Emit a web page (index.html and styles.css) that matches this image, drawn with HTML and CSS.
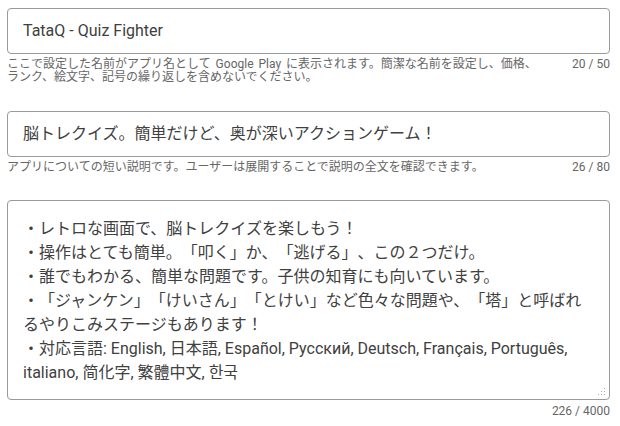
FILE: index.html
```html
<!DOCTYPE html>
<html lang="ja">
<head>
<meta charset="utf-8">
<link rel="stylesheet" href="styles.css">
</head>
<body>
<div class="form">
  <div class="field name-field">
    <div class="box single">TataQ - Quiz Fighter</div>
    <div class="meta">
      <div class="help">ここで設定した名前がアプリ名として Google Play に表示されます。簡潔な名前を設定し、価格、ランク、絵文字、記号の繰り返しを含めないでください。</div>
      <div class="count">20 / 50</div>
    </div>
  </div>
  <div class="field short-field">
    <div class="box single">脳トレクイズ。簡単だけど、奥が深いアクションゲーム！</div>
    <div class="meta">
      <div class="help">アプリについての短い説明です。ユーザーは展開することで説明の全文を確認できます。</div>
      <div class="count">26 / 80</div>
    </div>
  </div>
  <div class="field long-field">
    <div class="box multi">
      <p>・レトロな画面で、脳トレクイズを楽しもう！</p>
      <p>・操作はとても簡単。「叩く」か、「逃げる」、この２つだけ。</p>
      <p>・誰でもわかる、簡単な問題です。子供の知育にも向いています。</p>
      <p>・「ジャンケン」「けいさん」「とけい」など色々な問題や、「塔」と呼ばれるやりこみステージもあります！</p>
      <p>・対応言語: English, 日本語, Español, Русский, Deutsch, Français, Português, italiano, 简化字, 繁體中文, 한국</p>
      <svg class="grip" width="8" height="8" viewBox="0 0 8 8">
        <rect x="6" y="0" width="1" height="1" fill="#aaa"/>
        <rect x="3" y="3" width="1" height="1" fill="#aaa"/>
        <rect x="6" y="3" width="1" height="1" fill="#aaa"/>
        <rect x="0" y="6" width="1" height="1" fill="#aaa"/>
        <rect x="3" y="6" width="1" height="1" fill="#aaa"/>
        <rect x="6" y="6" width="1" height="1" fill="#aaa"/>
      </svg>
    </div>
    <div class="meta">
      <div class="help"></div>
      <div class="count">226 / 4000</div>
    </div>
  </div>
</div>
</body>
</html>
```

FILE: styles.css
```css
html, body {
  margin: 0;
  padding: 0;
  background: #fff;
}
body {
  font-family: Roboto, "Noto Sans CJK JP", sans-serif;
  color: #3c3c3c;
  text-spacing-trim: space-all;
}
.form {
  padding: 8px 10px 0 7px;
  display: flex;
  flex-direction: column;
}
.field {
  display: flex;
  flex-direction: column;
}
.name-field {
  margin-bottom: 27px;
}
.short-field {
  margin-bottom: 26px;
}
.box {
  border: 1px solid #9a9a9a;
  border-radius: 4px;
  font-size: 16px;
  color: #404040;
}
.single {
  height: 44px;
  line-height: 44px;
  padding: 0 15px;
}
.multi {
  position: relative;
  height: 168px;
  padding: 16px 15px 14px;
  line-height: 24px;
}
.multi p {
  margin: 0;
}
.grip {
  position: absolute;
  right: 3px;
  bottom: 3px;
}
.meta {
  display: flex;
  justify-content: space-between;
  margin-top: 4px;
  font-size: 12px;
  line-height: 13px;
  color: #666;
}
.help {
  flex: 0 1 536px;
  word-spacing: 2px;
}
.count {
  white-space: nowrap;
  color: #666;
}
.long-field .meta {
  margin-top: 5px;
}
```
